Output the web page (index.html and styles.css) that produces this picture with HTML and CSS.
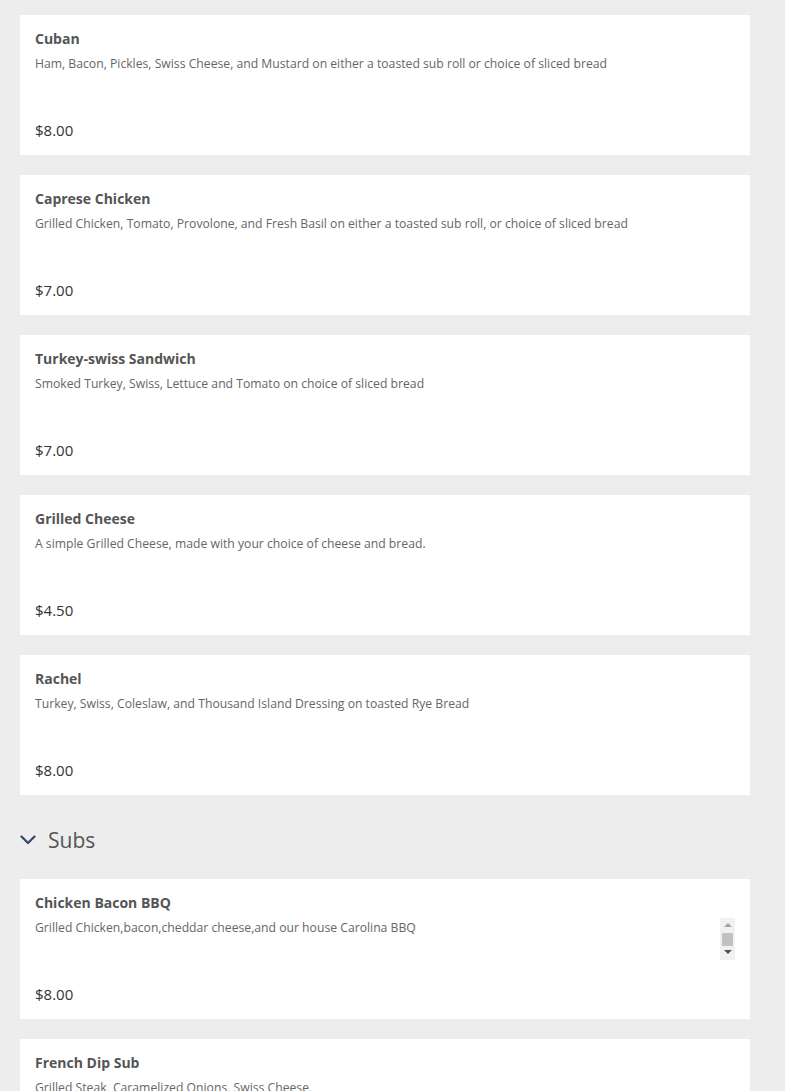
FILE: index.html
```html
<!DOCTYPE html>
<html>
<head>
<meta charset="utf-8">
<link rel="stylesheet" href="styles.css">
</head>
<body>
<div class="menu">
  <div class="card">
    <div class="title">Cuban</div>
    <div class="desc">Ham, Bacon, Pickles, Swiss Cheese, and Mustard on either a toasted sub roll or choice of sliced bread</div>
    <div class="price">$8.00</div>
  </div>
  <div class="card">
    <div class="title">Caprese Chicken</div>
    <div class="desc">Grilled Chicken, Tomato, Provolone, and Fresh Basil on either a toasted sub roll, or choice of sliced bread</div>
    <div class="price">$7.00</div>
  </div>
  <div class="card">
    <div class="title">Turkey-swiss Sandwich</div>
    <div class="desc">Smoked Turkey, Swiss, Lettuce and Tomato on choice of sliced bread</div>
    <div class="price">$7.00</div>
  </div>
  <div class="card">
    <div class="title">Grilled Cheese</div>
    <div class="desc">A simple Grilled Cheese, made with your choice of cheese and bread.</div>
    <div class="price">$4.50</div>
  </div>
  <div class="card">
    <div class="title">Rachel</div>
    <div class="desc">Turkey, Swiss, Coleslaw, and Thousand Island Dressing on toasted Rye Bread</div>
    <div class="price">$8.00</div>
  </div>

  <div class="section">
    <svg class="chev" width="16" height="10" viewBox="0 0 16 10"><path d="M1.5 1.5 L8 8 L14.5 1.5" fill="none" stroke="#34466a" stroke-width="2.2" stroke-linecap="round" stroke-linejoin="round"/></svg>
    <span class="section-name">Subs</span>
  </div>

  <div class="card">
    <div class="title">Chicken Bacon BBQ</div>
    <div class="desc scroll">Grilled Chicken,bacon,cheddar cheese,and our house Carolina BBQ
      <div class="sbar">
        <span class="sb-up"></span>
        <span class="sb-thumb"></span>
        <span class="sb-down"></span>
      </div>
    </div>
    <div class="price">$8.00</div>
  </div>
  <div class="card">
    <div class="title">French Dip Sub</div>
    <div class="desc">Grilled Steak, Caramelized Onions, Swiss Cheese,</div>
    <div class="price">$8.00</div>
  </div>
</div>
</body>
</html>
```

FILE: styles.css
```css
html, body {
  margin: 0;
  padding: 0;
  background: #ededed;
}
body {
  font-family: "Open Sans", "Liberation Sans", sans-serif;
  overflow: hidden;
  height: 1091px;
}
.menu {
  display: flex;
  flex-direction: column;
  gap: 20px;
  padding: 15px 35px 0 20px;
}
.card {
  background: #fff;
  height: 140px;
  flex-shrink: 0;
  box-sizing: border-box;
  padding: 14px 15px 15px 15px;
  display: flex;
  flex-direction: column;
}
.title {
  font-size: 14px;
  font-weight: 700;
  color: #555;
  line-height: 20px;
}
.desc {
  font-size: 12.2px;
  color: #666;
  line-height: 18px;
  margin-top: 6px;
  height: 42px;
}
.desc.scroll {
  position: relative;
  margin-top: 5px;
  padding-top: 1px;
  box-sizing: border-box;
}
.sbar {
  position: absolute;
  right: 0;
  top: 0;
  width: 15px;
  height: 42px;
  background: #f1f1f1;
  display: flex;
  flex-direction: column;
  align-items: center;
}
.sb-up {
  margin-top: 5px;
  width: 0;
  height: 0;
  border-left: 4px solid transparent;
  border-right: 4px solid transparent;
  border-bottom: 4px solid #a3a3a3;
}
.sb-thumb {
  margin-top: 6px;
  width: 11px;
  height: 13px;
  background: #c1c1c1;
}
.sb-down {
  margin-top: 4px;
  width: 0;
  height: 0;
  border-left: 4px solid transparent;
  border-right: 4px solid transparent;
  border-top: 4px solid #505050;
}
.price {
  margin-top: auto;
  font-size: 15px;
  color: #333;
  line-height: 20px;
}
.section {
  display: flex;
  align-items: center;
  gap: 12px;
  height: 44px;
  box-sizing: border-box;
  padding-top: 6px;
  flex-shrink: 0;
}
.chev {
  display: block;
}
.section-name {
  font-size: 21px;
  color: #555;
}
```
